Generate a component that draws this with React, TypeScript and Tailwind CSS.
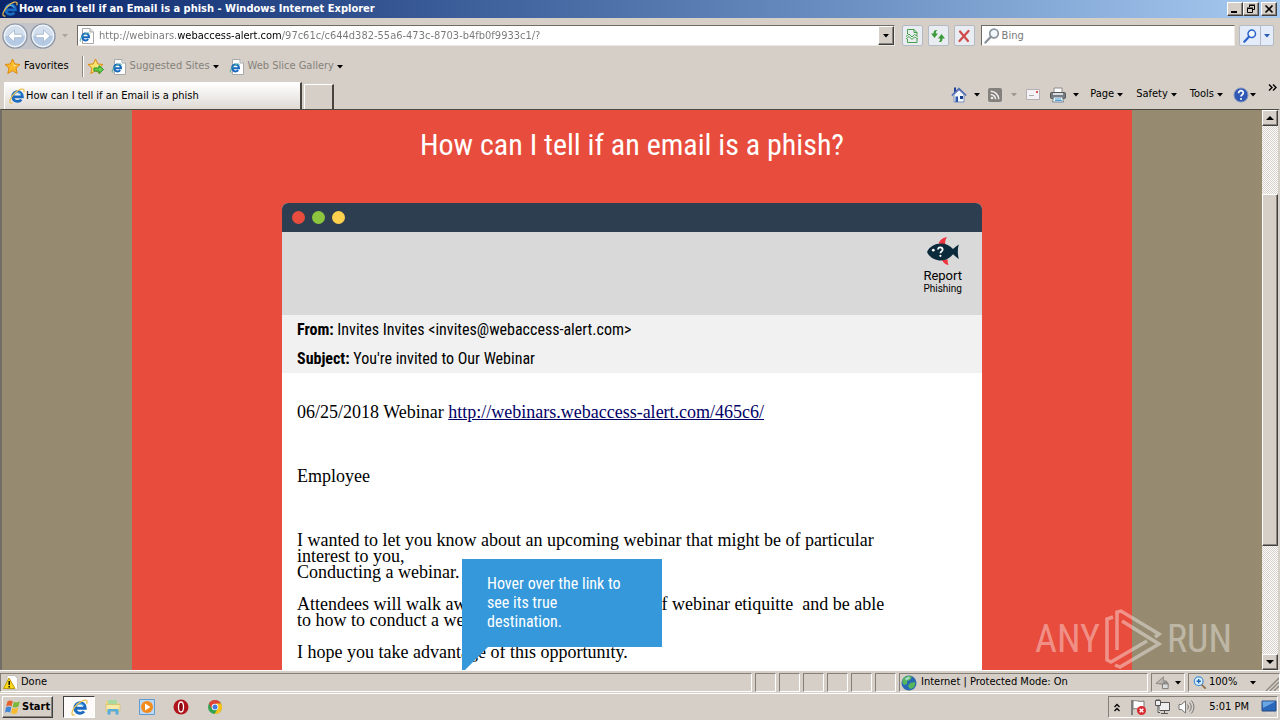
import type { ReactNode } from "react";

const raised =
  "border border-t-white border-l-white border-r-[#404040] border-b-[#404040] bg-[#d6cfc7] shadow-[inset_-1px_-1px_0_#8a857c]";
const sunken = "border border-t-[#848078] border-l-[#848078] border-r-white border-b-white";

function Caret({ className = "text-black" }: { className?: string }) {
  return (
    <svg viewBox="0 0 6 4" className={`h-[4px] w-[6px] shrink-0 ${className}`} aria-hidden="true">
      <path d="M0 0h6L3 3.5z" fill="currentColor" />
    </svg>
  );
}

function IeLogo({ className = "h-[16px] w-[16px]" }: { className?: string }) {
  return (
    <svg viewBox="0 0 16 16" className={`shrink-0 ${className}`} aria-hidden="true">
      <path d="M4 8.8h9.400A4.900 4.900 0 1 0 12.300 11.600" fill="none" stroke="#1b6cc0" strokeWidth="2.800" />
      <path d="M4.500 6.500A4.500 4.500 0 0 1 12 6.500" fill="none" stroke="#56b6f0" strokeWidth="1.200" />
      <path d="M3.400 14.900C1 15.600.2 13.900 1.600 10.800 3.200 7 8 2.300 12 1.200c3-.8 3.600.8 2.700 3.200" fill="none" stroke="#e9c04c" strokeWidth="1.200" />
    </svg>
  );
}

function IePage() {
  return (
    <svg viewBox="0 0 16 16" className="h-[16px] w-[16px] shrink-0" aria-hidden="true">
      <path d="M3.500 .5H11L14.500 4v11.500h-11z" fill="#fff" stroke="#a9a9a9" />
      <path d="M11 .5V4h3.500" fill="#e6e6e6" stroke="#a9a9a9" />
      <path d="M3.200 9.200h6.800A3.500 3.500 0 1 0 9.200 11.200" fill="none" stroke="#1668bf" strokeWidth="2" />
      <path d="M2 13.500C0 13 2 8 7 5.500c2-1 3.500-.8 3.300.6" fill="none" stroke="#4fb0a0" />
    </svg>
  );
}

function Star({ arrow = false }: { arrow?: boolean }) {
  return (
    <svg viewBox="0 0 17 17" className="h-[17px] w-[17px] shrink-0" aria-hidden="true">
      <path d="M8.500 1l2.200 4.900 5.300.6-4 3.600 1.200 5.400-4.700-2.800-4.700 2.800L5 10.100 1 6.500l5.300-.6z" fill={arrow ? "#f8e36a" : "#fbb829"} stroke="#dc8a12" strokeLinejoin="round" />
      <path d="M8.500 3.500L10 7l3 .4-3 1z" fill="#fff0a8" />
      {arrow && <path d="M7 10h5V7.500l4.500 4-4.500 4V13H7z" fill="#6bd04a" stroke="#22902a" />}
    </svg>
  );
}

function RoundArrow({ forward = false }: { forward?: boolean }) {
  return (
    <svg viewBox="0 0 26 26" className="h-[26px] w-[26px]" aria-hidden="true">
      <circle cx="13" cy="13" r="12" fill="#eef3f9" stroke="#8791a0" strokeWidth="1.200" />
      <path d="M3 13a10 10 0 0 0 20 0z" fill="#b4cae4" />
      <path d="M3 13a10 10 0 0 1 20 0z" fill="#d3dfed" />
      <path
        d={forward ? "M20 13l-6.500-6v4.300H6v3.400h7.500V19z" : "M6 13l6.500-6v4.300H20v3.400h-7.500V19z"}
        fill="#fff"
        stroke="#9fb3cc"
        strokeWidth=".8"
      />
    </svg>
  );
}

function ToolButton({ label, children }: { label: string; children: ReactNode }) {
  return (
    <button type="button" aria-label={label} className="flex h-[21px] w-[21px] shrink-0 items-center justify-center rounded-[2px] border border-[#b4bac4] bg-[#e9ecf0]">
      {children}
    </button>
  );
}

function Magnifier({ color, className }: { color: string; className: string }) {
  return (
    <svg viewBox="0 0 16 16" className={`shrink-0 ${className}`} aria-hidden="true">
      <circle cx="10" cy="5.500" r="4.300" fill="#f2f8fe" stroke={color} strokeWidth="1.700" />
      <path d="M6.800 8.800L1.500 14.500" stroke={color} strokeWidth="2.400" strokeLinecap="round" />
    </svg>
  );
}

function TitleBar() {
  return (
    <header className="flex h-[18px] shrink-0 items-center bg-linear-to-r from-[#0a246a] to-[#a6caf0] pl-[2px] pr-[3px]">
      <IeLogo />
      <h1 className="ml-px flex-1 truncate text-[11px] font-bold text-white">
        How can I tell if an Email is a phish - Windows Internet Explorer
      </h1>
      <button type="button" aria-label="Minimize" className={`flex h-[14px] w-[16px] items-center justify-center ${raised}`}>
        <svg viewBox="0 0 10 10" className="h-[10px] w-[10px]"><path d="M1 7h6v2H1z" /></svg>
      </button>
      <button type="button" aria-label="Restore" className={`flex h-[14px] w-[16px] items-center justify-center ${raised}`}>
        <svg viewBox="0 0 10 10" className="h-[10px] w-[10px]" fill="none" stroke="#000"><path d="M3.500 3V1.500h5v4H7M3 1h6M1.500 4.500h5v4h-5zM1 4h6" /></svg>
      </button>
      <button type="button" aria-label="Close" className={`ml-[2px] flex h-[14px] w-[16px] items-center justify-center ${raised}`}>
        <svg viewBox="0 0 10 10" className="h-[10px] w-[10px]" stroke="#000" strokeWidth="1.600"><path d="M1.500 1.500l7 7M8.500 1.500l-7 7" /></svg>
      </button>
    </header>
  );
}

function AddressBar() {
  return (
    <div className="flex h-[35px] shrink-0 items-center pl-[2px] pr-[6px]">
      <div className="flex items-center gap-[2px] rounded-full bg-[#c3c4ca]">
        <button type="button" aria-label="Back"><RoundArrow /></button>
        <button type="button" aria-label="Forward"><RoundArrow forward /></button>
      </div>
      <button type="button" aria-label="Recent pages" className="ml-[6px] mr-[9px]"><Caret className="text-[#aaa69f]" /></button>
      <div className="flex h-[21px] min-w-0 flex-1 items-center border border-[#6e6a64] border-b-[#ece9e4] border-r-[#ece9e4] bg-white pl-px">
        <IePage />
        <input
          type="text"
          aria-label="Address"
          defaultValue="http://webinars.webaccess-alert.com/97c61c/c644d382-55a6-473c-8703-b4fb0f9933c1/?"
          className="ml-[4px] min-w-0 flex-1 bg-[linear-gradient(90deg,#777_79px,#000_79px,#000_183px,#777_183px)] bg-clip-text pt-px text-[11px] text-transparent caret-black outline-none"
        />
        <button type="button" aria-label="Show addresses" className={`flex h-[19px] w-[16px] items-center justify-center ${raised}`}><Caret /></button>
      </div>
      <div className="ml-[7px] flex gap-[5px]">
        <ToolButton label="Compatibility view">
          <svg viewBox="0 0 14 14" className="h-[14px] w-[14px]" fill="none" stroke="#45a049">
            <path d="M2.500 5V.5h6.500L12 3.500V6M9 .5V3.500h3M2.500 10v3.500h9.500V10" /><path d="M1 7.500l3-2.500 3 3 2.500-2.500 3.500 2M1 10l3-2.500 3 3 2.500-2.500 3.500 2" />
          </svg>
        </ToolButton>
        <ToolButton label="Refresh">
          <svg viewBox="0 0 16 16" className="h-[16px] w-[16px]" fill="#3e9b3a"><path d="M7.500 2C5 1.500 3.500 2.500 3.500 5.500H1L4.500 10 8 5.500H5.800C5.800 3.800 6 3 7.500 2zM8.500 14c2.500.5 4-.5 4-3.500H15L11.500 6 8 10.500h2.200c0 1.700-.2 2.500-1.700 3.500z" /></svg>
        </ToolButton>
        <ToolButton label="Stop">
          <svg viewBox="0 0 14 14" className="h-[14px] w-[14px]" stroke="#cf4a48" strokeWidth="2.200" strokeLinecap="round"><path d="M3 2.500l8 9.500M11.500 2L2.500 12" /></svg>
        </ToolButton>
      </div>
      <label className="ml-[6px] flex h-[21px] w-[20%] shrink-0 items-center border border-[#6e6a64] border-b-[#ece9e4] border-r-[#ece9e4] bg-white pl-[2px]">
        <Magnifier color="#8b939c" className="h-[16px] w-[16px]" />
        <input type="search" aria-label="Search" placeholder="Bing" className="ml-[2px] min-w-0 flex-1 pt-px text-[11px] outline-none placeholder:text-[#777]" />
      </label>
      <div className="ml-[4px] flex h-[21px] rounded-[2px] border border-[#b4bac4] bg-[#e3ecf8]">
        <button type="button" aria-label="Go" className="flex w-[20px] items-center justify-center"><Magnifier color="#2762cc" className="h-[14px] w-[14px]" /></button>
        <button type="button" aria-label="Search options" className="flex w-[13px] items-center justify-center border-l border-[#b4bac4]"><Caret className="text-[#2a5cb0]" /></button>
      </div>
    </div>
  );
}

function FavoritesBar() {
  return (
    <nav aria-label="Favorites" className="flex h-[27px] shrink-0 items-center pl-[4px] text-[11px]">
      <button type="button" className="flex items-center gap-[3px]"><Star />Favorites</button>
      <span className="ml-[13px] h-[21px] w-[2px] border-l border-[#8c877f] border-r border-r-white" />
      <button type="button" aria-label="Add to favorites" className="ml-[3px]"><Star arrow /></button>
      <a href="#suggested" className="ml-[7px] flex items-center gap-[3px] text-[#85817b]"><IePage />Suggested Sites<Caret className="text-black" /></a>
      <a href="#slices" className="ml-[10px] flex items-center gap-[3px] text-[#85817b]"><IePage />Web Slice Gallery<Caret className="text-black" /></a>
    </nav>
  );
}

function HomeIcon() {
  return (
    <svg viewBox="0 0 16 16" className="h-[16px] w-[16px]" aria-hidden="true">
      <path d="M3 7.500V15h10V7.500L8 3z" fill="#f3f6fc" stroke="#7d92bd" />
      <path d="M3 .5h2v4l-2 2z" fill="#25419a" />
      <path d="M.8 8.500L8 1.500l7.200 7" fill="none" stroke="#4a68b2" strokeWidth="1.500" />
      <path d="M4.500 9.500h2.500V15H4.500z" fill="#2d56ac" /><path d="M9 9h3v3H9z" fill="#173f87" />
    </svg>
  );
}

function PrinterIcon() {
  return (
    <svg viewBox="0 0 16 16" className="h-[16px] w-[16px]" aria-hidden="true">
      <path d="M4 1h8v6H4z" fill="#fff" stroke="#8a8a8a" />
      <rect x=".5" y="5.500" width="15" height="6" rx="1" fill="#777c82" stroke="#555" />
      <path d="M3 6h10v2H3z" fill="#d9dde2" />
      <path d="M3.500 10h9l1 5h-11z" fill="#eef5fb" stroke="#7b8794" /><path d="M5 12h6M5 13.500h7" stroke="#4f9ed0" />
    </svg>
  );
}

function Menu({ label }: { label: string }) {
  return <button type="button" className="flex items-center gap-[3px]">{label}<Caret /></button>;
}

function TabBar() {
  return (
    <div className="flex h-[29px] shrink-0 items-end pl-[4px]">
      <button type="button" className="flex h-[27px] w-[298px] items-center border-l border-t border-white border-r-2 border-r-[#47443f] bg-linear-to-b from-white to-[#dfdad4] pl-[4px] text-[11px]">
        <IeLogo /><span className="ml-px">How can I tell if an Email is a phish</span>
      </button>
      <button type="button" aria-label="New tab" className="ml-[2px] h-[25px] w-[30px] border-l border-t border-white border-r-2 border-r-[#47443f]" />
      <div className="ml-auto flex h-full items-center pr-[3px] text-[11px]">
        <button type="button" aria-label="Home" className="flex items-center gap-[7px]"><HomeIcon /><Caret /></button>
        <button type="button" aria-label="Feeds" className="ml-[8px] flex items-center gap-[9px]">
          <svg viewBox="0 0 14 14" className="h-[14px] w-[14px]"><rect width="14" height="14" rx="2" fill="#84817c" /><circle cx="4" cy="10" r="1.300" fill="#eee" /><path d="M2.700 6.500a4.700 4.700 0 0 1 4.800 4.800M2.700 3.300a8 8 0 0 1 8 8" fill="none" stroke="#eee" strokeWidth="1.500" /></svg>
          <Caret className="text-[#9c978f]" />
        </button>
        <button type="button" aria-label="Mail" className="ml-[9px]">
          <svg viewBox="0 0 14 11" className="h-[11px] w-[14px]"><path d="M.5 .5h13v10H.5z" fill="#f4f2f4" stroke="#b5aeb4" /><path d="M10 2h2v2h-2z" fill="#d65757" /><path d="M3 6.500h5" stroke="#aaa" /></svg>
        </button>
        <button type="button" aria-label="Print" className="ml-[10px] flex items-center gap-[7px]"><PrinterIcon /><Caret /></button>
        <div className="ml-[11px] flex gap-[13px]"><Menu label="Page" /><Menu label="Safety" /><Menu label="Tools" /></div>
        <button type="button" aria-label="Help" className="ml-[10px] flex items-center gap-px">
          <svg viewBox="0 0 16 16" className="h-[16px] w-[16px]"><circle cx="8" cy="8" r="7" fill="#2f57b4" stroke="#7f93bf" /><path d="M5.600 6.200C5.600 2.800 10.500 3 10.300 6c-.1 1.700-2.300 1.800-2.300 3.500" fill="none" stroke="#fff" strokeWidth="1.700" /><circle cx="8" cy="12" r="1" fill="#fff" /></svg>
          <Caret />
        </button>
        <button type="button" aria-label="More commands" className="ml-[12px] self-start">
          <svg viewBox="0 0 9 7" className="mt-[4px] h-[7px] w-[9px]" fill="none" stroke="#000" strokeWidth="1.400"><path d="M1 .5l3 3-3 3M5 .5l3 3-3 3" /></svg>
        </button>
      </div>
    </div>
  );
}

function FishIcon() {
  return (
    <svg viewBox="0 0 34 30" className="h-[30px] w-[34px]" aria-hidden="true">
      <path d="M12.500 7.500C14 3.800 17 1.500 21 1c-1.500 2.500-2 4.500-1.800 7.500zM16 24c1.500 3 3.500 4.500 6.500 5-.8-1.800-1-3.500-.8-5.500z" fill="#ee3540" />
      <path d="M1 16C3.500 10.500 9 7.500 15 7.500c5 0 9 2 12 5.500 2-1.500 4-3.500 5.800-4.500-1.300 4.500-1.300 9.500 0 14.500-2-1.200-3.800-3-5.800-4.700-3 3.700-7 6.200-12 6.200C9 24.500 3.500 21.500 1 16z" fill="#0b2a3b" />
      <circle cx="7.300" cy="14.200" r="1.400" fill="#fff" />
      <path d="M12 13.500c.2-3 4.800-2.800 4.600.2-.1 1.700-2.200 1.700-2.200 3.600" fill="none" stroke="#fff" strokeWidth="1.800" /><circle cx="14.400" cy="19.800" r="1.100" fill="#fff" />
    </svg>
  );
}

function EmailCard() {
  return (
    <article className="relative mx-auto w-[70%] overflow-hidden rounded-t-[6px] bg-white">
      <div className="flex h-[29px] items-center gap-[7px] bg-[#2d3e50] pl-[10px]">
        <span className="h-[13px] w-[13px] rounded-full bg-[#e74c3c]" />
        <span className="h-[13px] w-[13px] rounded-full bg-[#8cc63f]" />
        <span className="h-[13px] w-[13px] rounded-full bg-[#fdd04e]" />
      </div>
      <div className="flex h-[83px] justify-end bg-[#d9d9d9] pr-[20px] pt-[4px]">
        <button type="button" className="flex flex-col items-center font-['Roboto',sans-serif]">
          <FishIcon />
          <span className="mt-[3px] text-[13px] leading-[14px]">Report</span>
          <span className="text-[10px] leading-[12px]">Phishing</span>
        </button>
      </div>
      <div className="bg-[#f1f1f1] pl-[15px] font-['Roboto_Condensed','Roboto',sans-serif] text-[16px] leading-[29px]">
        <p><b>From:</b> Invites Invites &lt;invites@webaccess-alert.com&gt;</p>
        <p><b>Subject:</b> You're invited to Our Webinar</p>
      </div>
      <div className="whitespace-pre px-[15px] pb-[48px] pt-[31px] font-['Liberation_Serif',serif] text-[18px] leading-[16px]">
        <p>06/25/2018 Webinar <a href="#webinar" className="text-[#000066] underline">http://webinars.webaccess-alert.com/465c6/</a></p>
        <p className="mt-[48px]">Employee</p>
        <p className="mt-[48px]">I wanted to let you know about an upcoming webinar that might be of particular<br />interest to you,<br />Conducting a webinar.</p>
        <p className="mt-[16px]">Attendees will walk away with an understanding of webinar etiquitte  and be able<br />to how to conduct a webinar.</p>
        <p className="mt-[16px]">I hope you take advantage of this opportunity.</p>
      </div>
      <div role="tooltip" className="absolute left-[180px] top-[356px] w-[200px] bg-[#3498db] pb-[16px] pl-[25px] pr-[30px] pt-[15px] font-['Roboto_Condensed','Roboto',sans-serif] text-[16px] leading-[19px] text-white">
        Hover over the link to see its true destination.
        <svg viewBox="0 0 26 26" className="absolute left-0 top-full h-[26px] w-[26px]" aria-hidden="true"><path d="M0 0h26L0 26z" fill="#3498db" /></svg>
      </div>
    </article>
  );
}

function Watermark() {
  return (
    <div className="pointer-events-none absolute bottom-0 right-[46px] flex items-center gap-[5px] font-['Roboto_Condensed',sans-serif] text-[38px] leading-none text-white/40">
      <span>ANY</span>
      <svg viewBox="0 0 57 62" className="h-[62px] w-[57px]" fill="none" stroke="currentColor" strokeWidth="3.500" aria-hidden="true">
        <path d="M12 42V4l4-1 38 23-4 3M17 13l37 23L15 59l-5-2M8 9l-6 2v41l4 2 36-21" />
      </svg>
      <span>RUN</span>
    </div>
  );
}

function ScrollBar() {
  return (
    <div className="flex w-[16px] shrink-0 flex-col bg-[#d6cfc7] bg-[repeating-conic-gradient(#fff_0_25%,#d6cfc7_0_50%)] bg-[length:2px_2px]">
      <button type="button" aria-label="Scroll up" className={`flex h-[16px] shrink-0 items-center justify-center ${raised}`}><svg viewBox="0 0 8 4" className="h-[4px] w-[8px]"><path d="M0 4h8L4 0z" /></svg></button>
      <div className="flex-[68]" />
      <div className={`flex-[352] ${raised}`} />
      <div className="flex-[108]" />
      <button type="button" aria-label="Scroll down" className={`flex h-[16px] shrink-0 items-center justify-center ${raised}`}><svg viewBox="0 0 8 4" className="h-[4px] w-[8px]"><path d="M0 0h8L4 4z" /></svg></button>
    </div>
  );
}

function StatusBar() {
  return (
    <div className="flex h-[23px] shrink-0 items-stretch gap-[3px] border-t border-white pb-px pt-[2px] text-[11px]">
      <div className={`flex flex-1 items-center gap-[3px] pl-[2px] ${sunken}`}>
        <svg viewBox="0 0 15 15" className="h-[15px] w-[15px]"><path d="M4 .5h8l2.500 3v11H4z" fill="#fff" stroke="#c4c0ba" /><path d="M6 3l6 10.500H.5z" fill="#fbd916" stroke="#bd9b09" /><path d="M6.200 6v4M6.200 11v1.500" stroke="#000" strokeWidth="1.400" /></svg>
        Done
      </div>
      {[0, 1, 2, 3, 4, 5].map((n) => <div key={n} className={`w-[21px] ${sunken}`} />)}
      <div className={`flex w-[249px] items-center gap-[4px] pl-px ${sunken}`}>
        <svg viewBox="0 0 16 16" className="h-[16px] w-[16px]"><circle cx="8" cy="8" r="7.500" fill="#2869b2" /><path d="M2 4c3-4 7-3 9-2l-2 3-3 1v3l-3 1C1 8 1 6 2 4zM9 8l5-1c1 4-2 7-5 7l-2-3z" fill="#55b65c" /><path d="M4 3.500l4-2 1 2-4 2z" fill="#cceeff" opacity=".7" /></svg>
        Internet | Protected Mode: On
      </div>
      <button type="button" aria-label="Privacy" className={`flex w-[34px] items-center justify-center gap-[5px] ${sunken}`}>
        <svg viewBox="0 0 16 16" className="h-[15px] w-[15px]"><path d="M1 9L9 2v4c4 0 5 2 5 5l-5-2v1z" fill="#b8b3ad" stroke="#8b867f" /><path d="M8 9.500h6v5H8z" fill="#ddd" stroke="#777" /><path d="M9.500 9V7.500h3V9" fill="none" stroke="#777" /></svg>
        <Caret />
      </button>
      <button type="button" className={`flex w-[92px] items-center pl-[4px] ${sunken}`}>
        <svg viewBox="0 0 16 16" className="h-[14px] w-[14px]"><circle cx="6.500" cy="6" r="5" fill="#ddf0fd" stroke="#4a93d4" strokeWidth="1.500" /><path d="M6.500 3.500v5M4 6h5" stroke="#1863b0" strokeWidth="1.500" /><path d="M10 10l4.500 4.500" stroke="#8e6b45" strokeWidth="2" /></svg>
        <span className="ml-[2px]">100%</span>
        <span className="ml-[13px]"><Caret /></span>
        <svg viewBox="0 0 14 14" className="ml-auto h-[14px] w-[14px] self-end" stroke="#8d8880" strokeWidth="1.300"><path d="M1 14L14 1M5 14l9-9M9 14l5-5" /></svg>
      </button>
    </div>
  );
}

function Taskbar() {
  return (
    <footer className="flex h-[27px] shrink-0 items-center border-t border-white pl-[2px] pr-[2px] text-[11px]">
      <button type="button" className={`flex h-[22px] items-center gap-px px-[2px] font-bold ${raised}`}>
        <svg viewBox="0 0 16 16" className="h-[16px] w-[16px]"><path d="M2.500 2.500C4.500 1 6 1.200 7.800 2.300L6.500 7.500C4.700 6.300 3 6.300 1 7.700z" fill="#e5602b" /><path d="M8.800 2.800c2 1 3.500.8 6-.5L13.500 7.500c-2.300 1.300-4 1.300-5.900.4z" fill="#7cb93b" /><path d="M.8 8.700c2-1.400 3.700-1.400 5.500-.2L5 13.700c-1.800-1.200-3.500-1.200-5 .2z" fill="#3f86d8" /><path d="M7.300 9c2 1 3.700.9 6-.4L12 14c-2.300 1.200-4 1.200-6 0z" fill="#f6bb2c" /></svg>
        Start
      </button>
      <button type="button" aria-label="Internet Explorer" className="ml-[10px] flex h-[22px] w-[32px] items-center justify-center border border-[#404040] border-b-white border-r-white bg-[#fcfbfa]"><IeLogo className="h-[17px] w-[17px]" /></button>
      <button type="button" aria-label="Explorer" className="ml-[10px]">
        <svg viewBox="0 0 16 16" className="h-[16px] w-[16px]"><path d="M1 2h5l1.500 2H14v9H1z" fill="#ecd578" /><path d="M3 1h9v5H3z" fill="#a8d9a0" /><path d="M1 5.500h14V12H1z" fill="#f8e9a4" stroke="#d3b95d" strokeWidth=".6" /><path d="M2.500 15.500V10h11v5.500h-3V12.500h-5v3z" fill="#58acdf" /></svg>
      </button>
      <button type="button" aria-label="Media Player" className="ml-[18px]">
        <svg viewBox="0 0 16 16" className="h-[16px] w-[16px]"><path d="M.5 .5h15v15H.5z" fill="#bdd8f0" stroke="#5e9bd2" /><circle cx="8" cy="8" r="6" fill="#f28a1c" /><path d="M6 4.500L11.500 8 6 11.500z" fill="#fff" /></svg>
      </button>
      <button type="button" aria-label="Opera" className="ml-[18px]">
        <svg viewBox="0 0 16 16" className="h-[16px] w-[16px]"><circle cx="8" cy="8" r="7.500" fill="#b0141d" /><ellipse cx="8" cy="8" rx="2.500" ry="5" fill="#8c0810" stroke="#fff" strokeWidth="1.300" /></svg>
      </button>
      <button type="button" aria-label="Chrome" className="ml-[18px]">
        <svg viewBox="0 0 16 16" className="h-[16px] w-[16px]"><circle cx="8" cy="8" r="7" fill="#32a350" /><path d="M1.900 4.500A7 7 0 0 1 14.100 4.500L8 5 5 10z" fill="#df4236" /><path d="M14.100 4.500A7 7 0 0 1 7.500 15l3.500-5.500L9 4.500z" fill="#fbc116" /><circle cx="8" cy="8" r="3.300" fill="#fff" /><circle cx="8" cy="8" r="2.500" fill="#3f7de0" /></svg>
      </button>
      <div className={`ml-auto flex h-[22px] items-center ${sunken}`}>
        <button type="button" aria-label="Show hidden icons" className="ml-[5px]">
          <svg viewBox="0 0 6 9" className="h-[9px] w-[6px]" fill="none" stroke="#000" strokeWidth="1.300"><path d="M.5 4L3 1.500 5.500 4M.5 8L3 5.500 5.500 8" /></svg>
        </button>
        <svg viewBox="0 0 17 17" className="ml-[10px] h-[17px] w-[17px]"><path d="M2 1v15" stroke="#666" strokeWidth="1.500" /><path d="M3 2c4-1.500 5 1.500 11 0v8c-5 1.500-7-1.500-11 0z" fill="#fff" stroke="#777" /><circle cx="11.500" cy="11.500" r="4.500" fill="#d8292f" /><path d="M9.700 9.700l3.600 3.600M13.300 9.700l-3.600 3.600" stroke="#fff" strokeWidth="1.400" /></svg>
        <svg viewBox="0 0 16 16" className="ml-[7px] h-[16px] w-[16px]" fill="#eee" stroke="#555"><path d="M5 3.500h10.500v8H5zM7 14.500h7M10.500 12v2" /><path d="M1.500 1.500h5v5h-5zM3 0v2M5 0v2M4 6.500v7h2" /></svg>
        <svg viewBox="0 0 17 16" className="ml-[8px] h-[16px] w-[17px]" fill="none" stroke="#777"><path d="M1 5.500h2.500L7.500 2v12l-4-3.500H1z" fill="#fff" /><path d="M9.500 5.500q2 2.500 0 5M11.500 3.500q3.500 4.500 0 9M13.500 1.500q5 6.500 0 13" /></svg>
        <time className="ml-[14px]">5:01 PM</time>
        <button type="button" aria-label="Show desktop" className="ml-[12px]">
          <svg viewBox="0 0 16 14" className="h-[14px] w-[16px]"><path d="M1 1h14v10H1z" fill="#2a68bb" stroke="#224a82" /><path d="M1.500 1.500h13L2 8z" fill="#6ba6e4" /><path d="M5 13h8" stroke="#ddd" /></svg>
        </button>
      </div>
    </footer>
  );
}

export default function App() {
  return (
    <div className="flex h-screen flex-col overflow-hidden bg-[#d6cfc7] font-['DejaVu_Sans_Condensed','DejaVu_Sans',sans-serif] text-black">
      <TitleBar />
      <AddressBar />
      <FavoritesBar />
      <TabBar />
      <div className="relative flex min-h-0 flex-1 border-x-2 border-t border-l-[#716d64] border-r-[#d6cfc7] border-t-[#4b4842]">
        <main className="min-w-0 flex-1 overflow-hidden bg-[#968b70]">
          <section className="mx-auto min-h-full max-w-[1000px] bg-[#e74c3c]">
            <h2 className="px-4 pb-[40px] pt-[17px] text-center font-['Roboto_Condensed','Roboto',sans-serif] text-[30px] leading-[36px] text-white">How can I tell if an email is a phish?</h2>
            <EmailCard />
          </section>
        </main>
        <ScrollBar />
        <Watermark />
      </div>
      <StatusBar />
      <Taskbar />
    </div>
  );
}
